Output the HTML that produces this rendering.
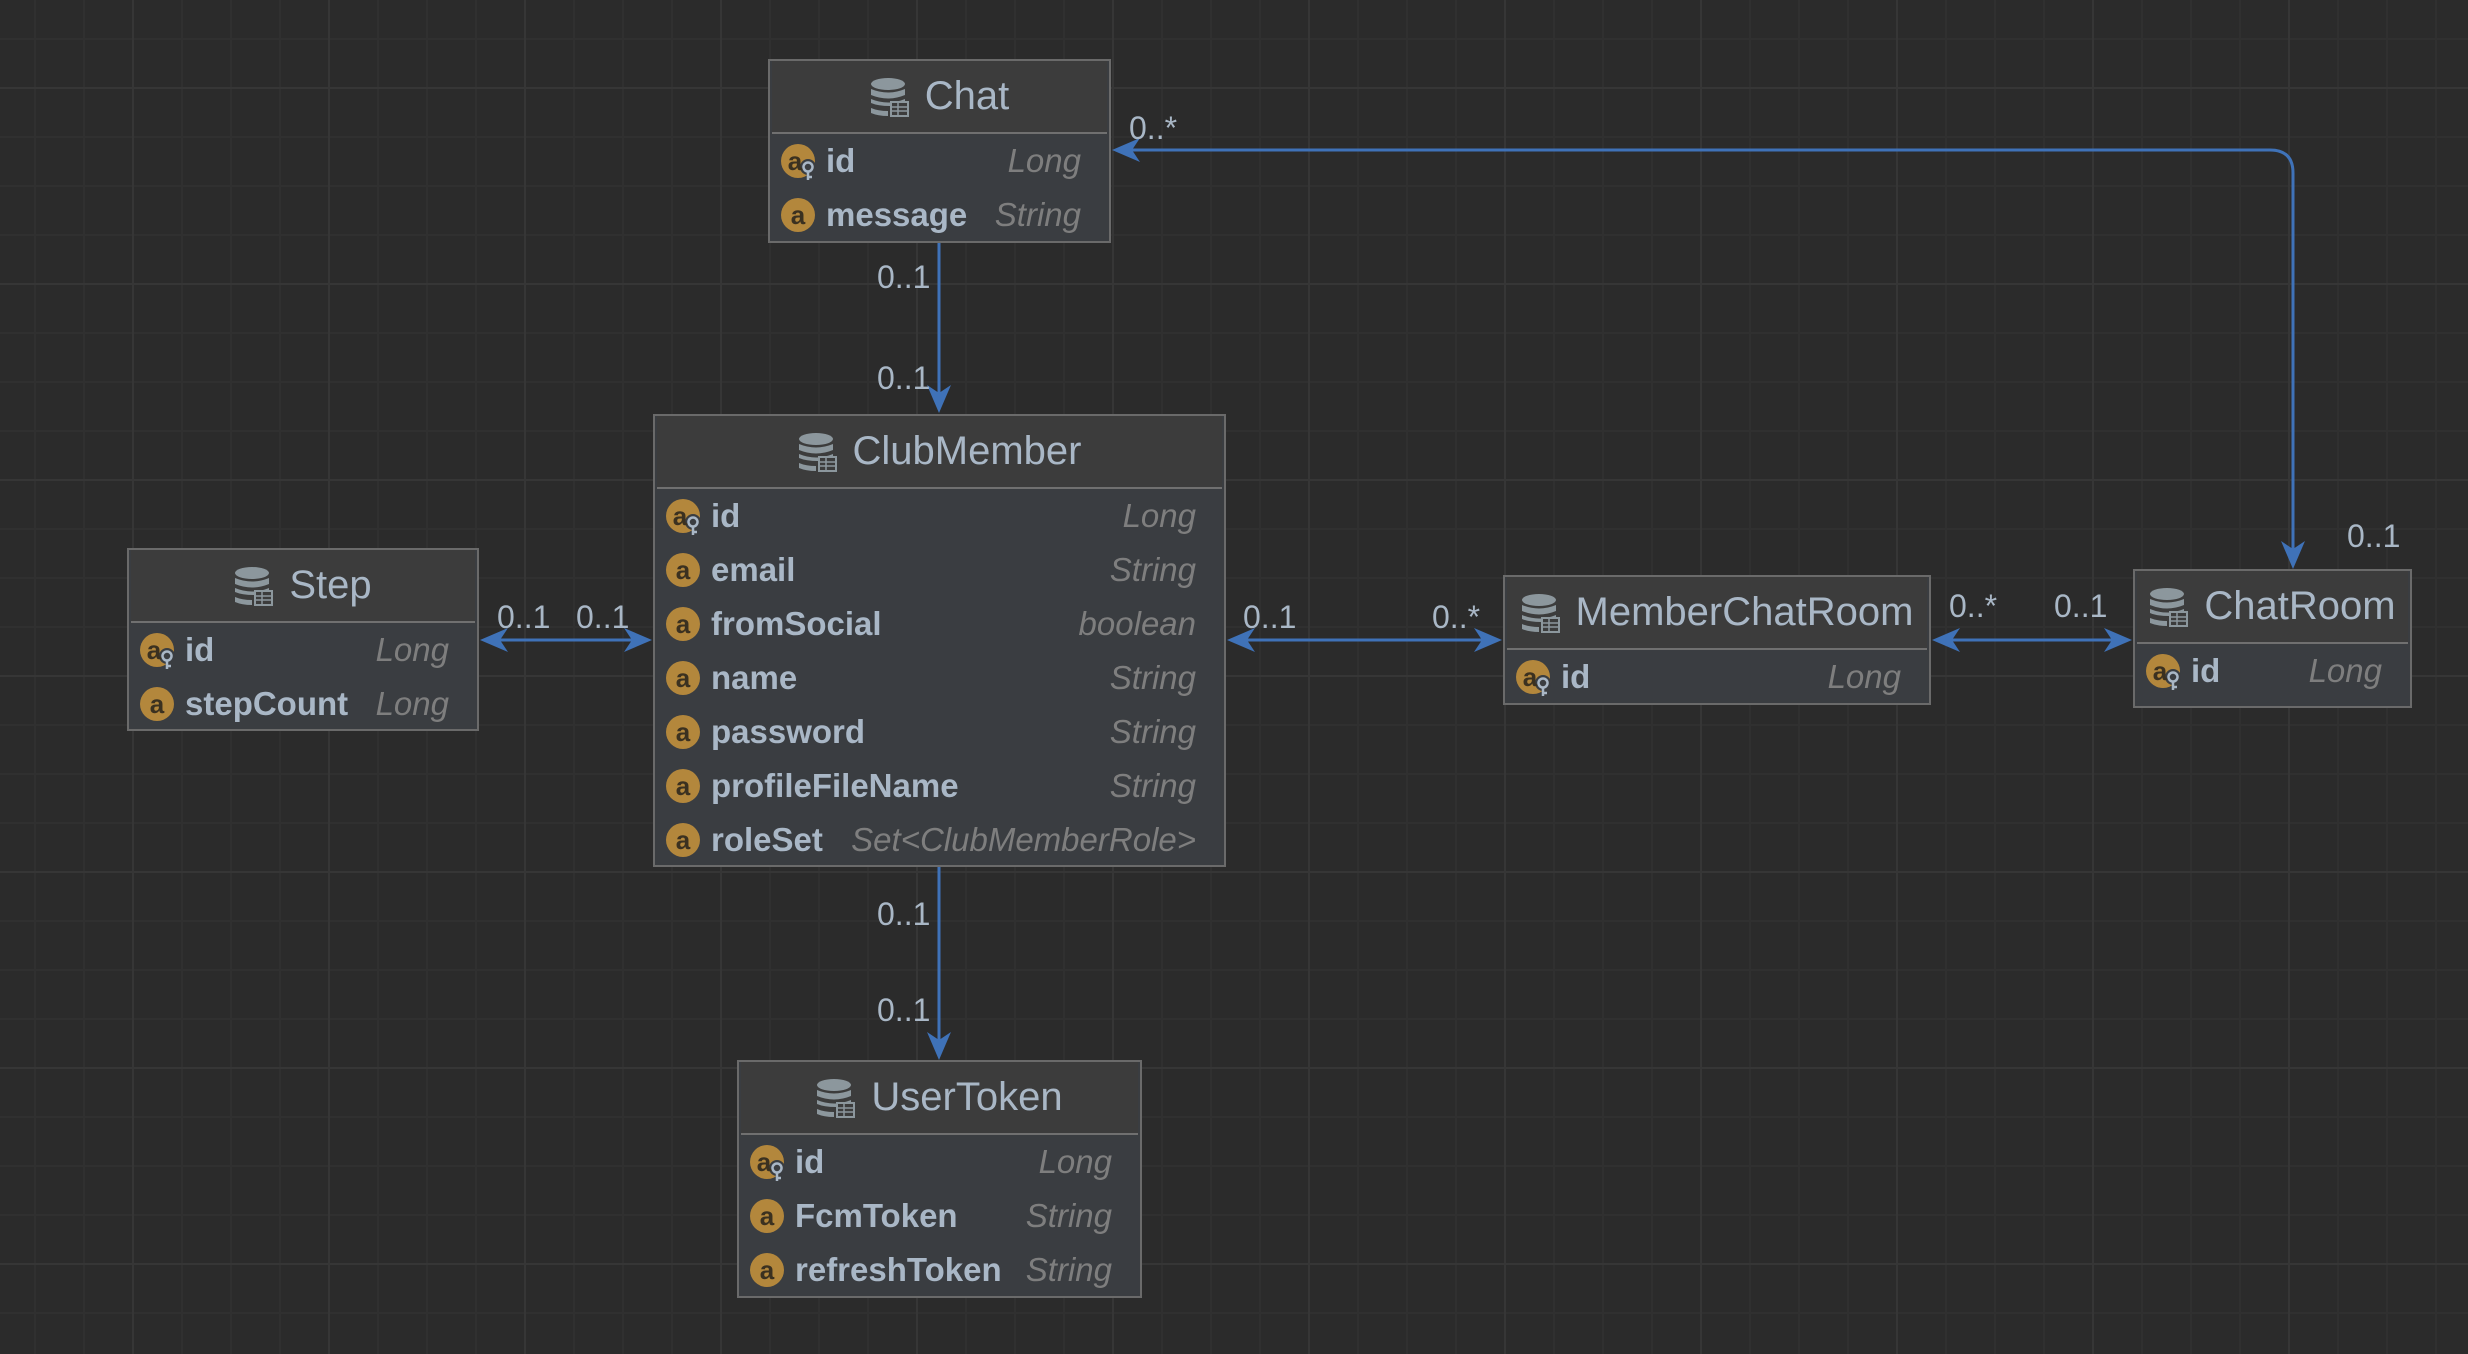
<!DOCTYPE html>
<html><head><meta charset="utf-8">
<style>
html,body{margin:0;padding:0}
body{width:2468px;height:1354px;overflow:hidden;position:relative;background-color:#2b2b2b;
background-image:
linear-gradient(to right,#363636 2px,transparent 2px),
linear-gradient(to bottom,#363636 2px,transparent 2px),
linear-gradient(to right,#303030 2px,transparent 2px),
linear-gradient(to bottom,#303030 2px,transparent 2px);
background-size:196px 196px,196px 196px,49px 49px,49px 49px;
background-position:132px 0,0 87px,34px 0,0 38px;
font-family:"Liberation Sans",sans-serif;}
.box{position:absolute;border:2px solid #6a6a6a;background:#3a3d41;box-sizing:border-box}
.hd{height:71px;background:#3c3c3c;border-bottom:2px solid #707070;display:flex;align-items:center;justify-content:center;color:#a9b7c6;font-size:40px;margin:0 2px;}
.hd svg{margin-right:16px}
.row{height:54px;position:relative;color:#a9b7c6;font-weight:bold;font-size:33px}
.row .ic{position:absolute;left:10px;top:9px}
.row .n{position:absolute;left:56px;top:0;line-height:54px}
.row .t{position:absolute;right:28px;top:0;line-height:54px;color:#7e7e7e;font-weight:normal;font-style:italic}
svg.ov{position:absolute;left:0;top:0}
.lbl{fill:#a9b7c6;font-family:"Liberation Sans",sans-serif;font-size:32px}
</style></head><body>
<svg width="0" height="0" style="position:absolute">
<defs>
<g id="db"><ellipse cx="18" cy="7" rx="17" ry="6" fill="#8c979d"/><path d="M1 12 Q18 19 35 12 V18 Q18 25 1 18Z" fill="#8c979d"/><path d="M1 22 Q18 29 35 22 V25 H20 V29 Q8 29 1 26Z" fill="#8c979d"/><path d="M1 31 Q8 34 18 34 V39 Q8 39 1 36Z" fill="#8c979d"/><rect x="21" y="25" width="17" height="14" fill="none" stroke="#8c979d" stroke-width="2"/><path d="M21 30H38M21 34H38M28 25V39" stroke="#8c979d" stroke-width="1.5"/></g>
<g id="fa"><circle cx="18" cy="18" r="17" fill="#b3873c"/><text x="18" y="27" text-anchor="middle" font-family="Liberation Sans,sans-serif" font-size="26" fill="#3b3120">a</text></g>
<g id="fk"><circle cx="18" cy="18" r="17" fill="#b3873c"/><circle cx="28" cy="24" r="8" fill="#3a3d41"/><text x="15" y="27" text-anchor="middle" font-family="Liberation Sans,sans-serif" font-size="26" fill="#3b3120">a</text><circle cx="28" cy="24" r="4.5" fill="none" stroke="#a9b7c6" stroke-width="2.5"/><path d="M28 28V37M28 34H32" stroke="#a9b7c6" stroke-width="2.5"/></g>
</defs></svg>

<div class="box" style="left:768px;top:59px;width:343px;height:184px">
<div class="hd"><svg width="39" height="40"><use href="#db"/></svg>Chat</div>
<div class="row"><svg class="ic" width="38" height="38"><use href="#fk"/></svg><span class="n">id</span><span class="t">Long</span></div>
<div class="row"><svg class="ic" width="38" height="38"><use href="#fa"/></svg><span class="n">message</span><span class="t">String</span></div>
</div>

<div class="box" style="left:653px;top:414px;width:573px;height:453px">
<div class="hd"><svg width="39" height="40"><use href="#db"/></svg>ClubMember</div>
<div class="row"><svg class="ic" width="38" height="38"><use href="#fk"/></svg><span class="n">id</span><span class="t">Long</span></div>
<div class="row"><svg class="ic" width="38" height="38"><use href="#fa"/></svg><span class="n">email</span><span class="t">String</span></div>
<div class="row"><svg class="ic" width="38" height="38"><use href="#fa"/></svg><span class="n">fromSocial</span><span class="t">boolean</span></div>
<div class="row"><svg class="ic" width="38" height="38"><use href="#fa"/></svg><span class="n">name</span><span class="t">String</span></div>
<div class="row"><svg class="ic" width="38" height="38"><use href="#fa"/></svg><span class="n">password</span><span class="t">String</span></div>
<div class="row"><svg class="ic" width="38" height="38"><use href="#fa"/></svg><span class="n">profileFileName</span><span class="t">String</span></div>
<div class="row"><svg class="ic" width="38" height="38"><use href="#fa"/></svg><span class="n">roleSet</span><span class="t">Set&lt;ClubMemberRole&gt;</span></div>
</div>

<div class="box" style="left:127px;top:548px;width:352px;height:183px">
<div class="hd"><svg width="39" height="40"><use href="#db"/></svg>Step</div>
<div class="row"><svg class="ic" width="38" height="38"><use href="#fk"/></svg><span class="n">id</span><span class="t">Long</span></div>
<div class="row"><svg class="ic" width="38" height="38"><use href="#fa"/></svg><span class="n">stepCount</span><span class="t">Long</span></div>
</div>

<div class="box" style="left:1503px;top:575px;width:428px;height:130px">
<div class="hd"><svg width="39" height="40"><use href="#db"/></svg>MemberChatRoom</div>
<div class="row"><svg class="ic" width="38" height="38"><use href="#fk"/></svg><span class="n">id</span><span class="t">Long</span></div>
</div>

<div class="box" style="left:2133px;top:569px;width:279px;height:139px">
<div class="hd"><svg width="39" height="40"><use href="#db"/></svg>ChatRoom</div>
<div class="row"><svg class="ic" width="38" height="38"><use href="#fk"/></svg><span class="n">id</span><span class="t">Long</span></div>
</div>

<div class="box" style="left:737px;top:1060px;width:405px;height:238px">
<div class="hd"><svg width="39" height="40"><use href="#db"/></svg>UserToken</div>
<div class="row"><svg class="ic" width="38" height="38"><use href="#fk"/></svg><span class="n">id</span><span class="t">Long</span></div>
<div class="row"><svg class="ic" width="38" height="38"><use href="#fa"/></svg><span class="n">FcmToken</span><span class="t">String</span></div>
<div class="row"><svg class="ic" width="38" height="38"><use href="#fa"/></svg><span class="n">refreshToken</span><span class="t">String</span></div>
</div>

<svg class="ov" width="2468" height="1354">
<g stroke="#3f72b8" stroke-width="3" fill="none">
<path d="M1125 150 H2270 Q2293 150 2293 173 V555"/>
<path d="M939 243 V400"/>
<path d="M939 867 V1046"/>
<path d="M492 640 H640"/>
<path d="M1240 640 H1490"/>
<path d="M1945 640 H2120"/>
</g>
<g fill="#3f72b8">
<path d="M1112 150 L1140 138 L1132 150 L1140 162Z"/>
<path d="M2293 569 L2281 541 L2293 549 L2305 541Z"/>
<path d="M939 413 L927 385 L939 393 L951 385Z"/>
<path d="M939 1060 L927 1032 L939 1040 L951 1032Z"/>
<path d="M480 640 L508 628 L500 640 L508 652Z"/>
<path d="M652 640 L624 628 L632 640 L624 652Z"/>
<path d="M1227 640 L1255 628 L1247 640 L1255 652Z"/>
<path d="M1502 640 L1474 628 L1482 640 L1474 652Z"/>
<path d="M1932 640 L1960 628 L1952 640 L1960 652Z"/>
<path d="M2132 640 L2104 628 L2112 640 L2104 652Z"/>
</g>
<text class="lbl" x="1129" y="139">0..*</text>
<text class="lbl" x="2347" y="547">0..1</text>
<text class="lbl" x="877" y="288">0..1</text>
<text class="lbl" x="877" y="389">0..1</text>
<text class="lbl" x="877" y="925">0..1</text>
<text class="lbl" x="877" y="1021">0..1</text>
<text class="lbl" x="497" y="628">0..1</text>
<text class="lbl" x="576" y="628">0..1</text>
<text class="lbl" x="1243" y="628">0..1</text>
<text class="lbl" x="1432" y="628">0..*</text>
<text class="lbl" x="1949" y="617">0..*</text>
<text class="lbl" x="2054" y="617">0..1</text>
</svg>
</body></html>
